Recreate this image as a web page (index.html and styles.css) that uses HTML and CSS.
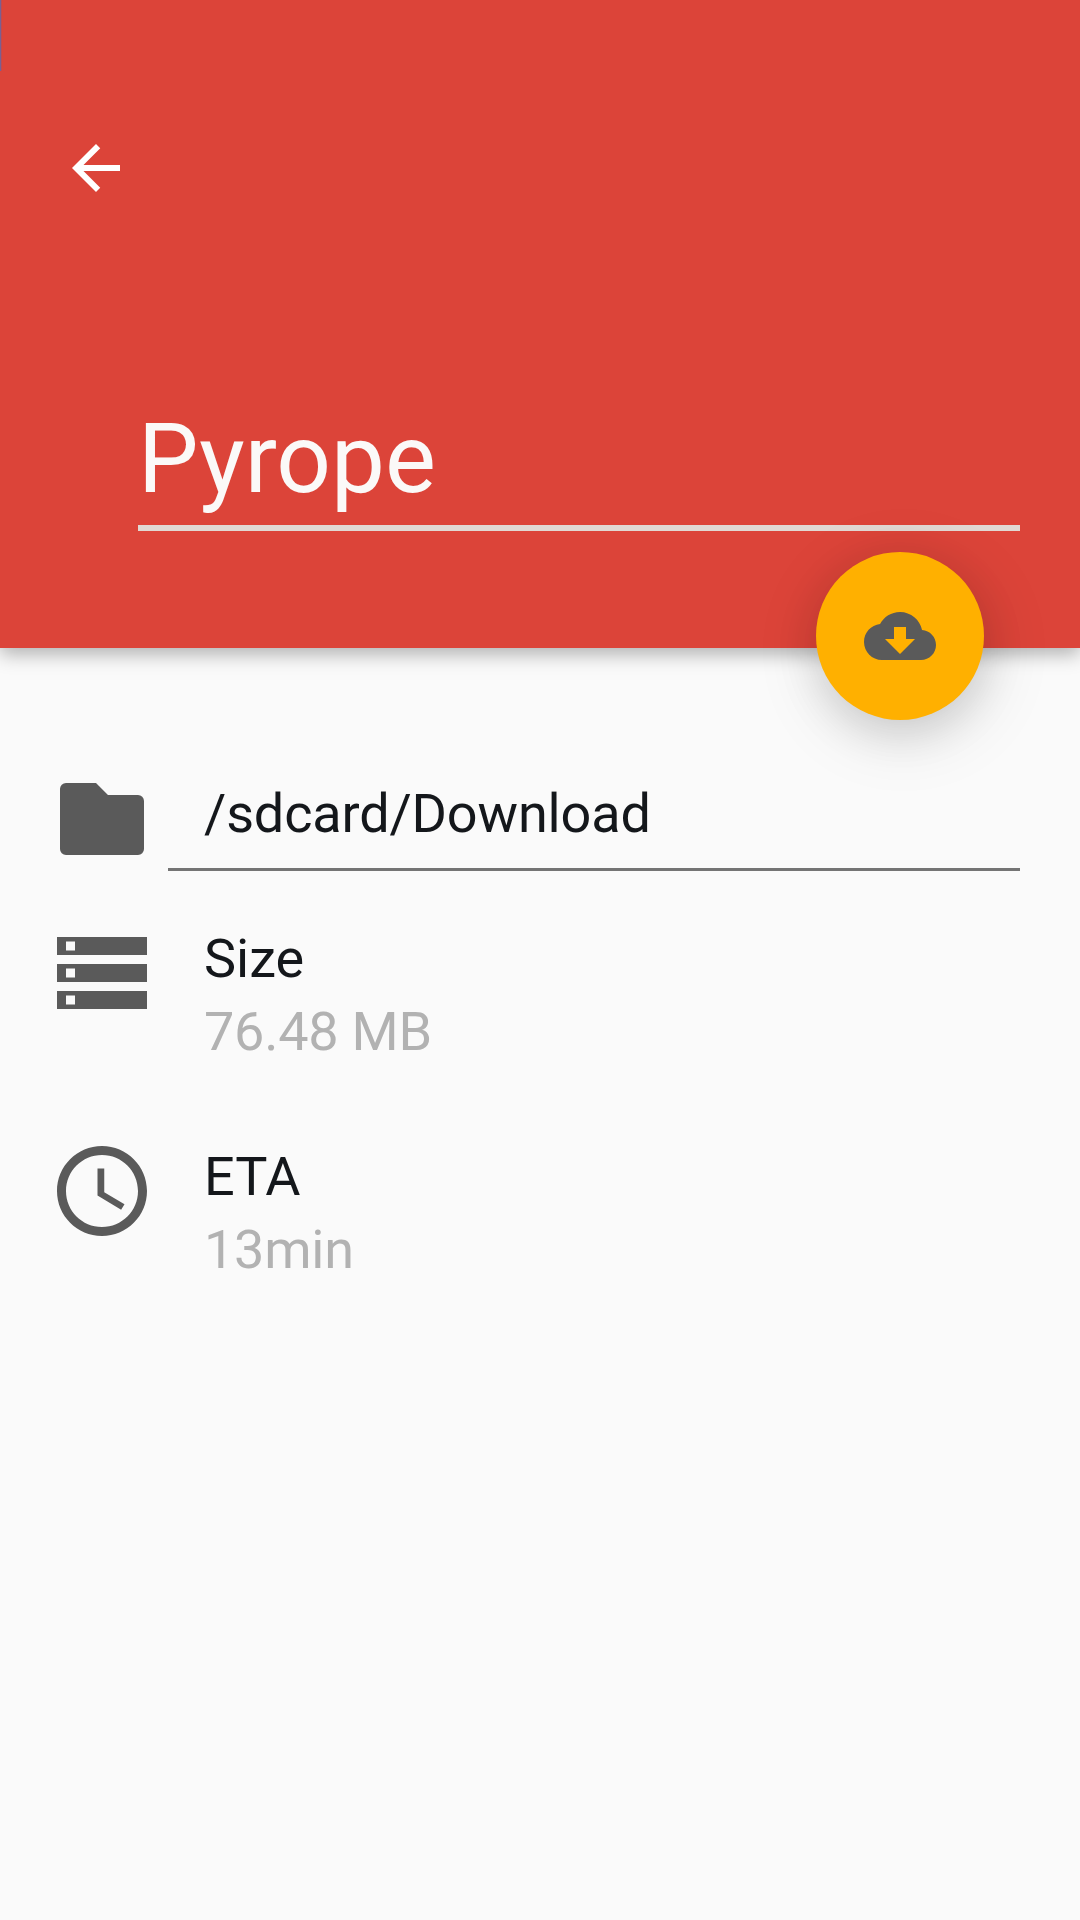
FILE: index.html
```html
<!DOCTYPE html>
<html lang="en">
<head>
<meta charset="utf-8">
<title>Pyrope</title>
<link rel="stylesheet" href="styles.css">
</head>
<body>
<header class="header">
  <span class="edge"></span>
  <button class="back" aria-label="Back"><svg viewBox="0 0 24 24"><path d="M20 11H7.83l5.59-5.59L12 4l-8 8 8 8 1.41-1.41L7.83 13H20z"/></svg></button>
  <h1 class="title">Pyrope</h1>
  <button class="fab" aria-label="Download"><svg viewBox="0 0 24 24"><path d="M19.35 10.04C18.67 6.59 15.64 4 12 4 9.11 4 6.6 5.64 5.35 8.04 2.34 8.36 0 10.91 0 14c0 3.31 2.69 6 6 6h13c2.76 0 5-2.24 5-5 0-2.64-2.05-4.78-4.65-4.96zM17 13l-5 5-5-5h3V9h4v4h3z"/></svg></button>
</header>
<main class="content">
  <section class="row row-path">
    <svg class="icon" viewBox="0 0 108 108"><path d="M18 18H48L60 30H90a6 6 0 0 1 6 6V84a6 6 0 0 1-6 6H18a6 6 0 0 1-6-6V24a6 6 0 0 1 6-6z"/></svg>
    <div class="path">/sdcard/Download</div>
  </section>
  <section class="row">
    <svg class="icon" viewBox="0 0 24 24"><path d="M2 20h20v-4H2v4zm2-3h2v2H4v-2zM2 4v4h20V4H2zm4 3H4V5h2v2zm-4 7h20v-4H2v4zm2-3h2v2H4v-2z"/></svg>
    <div class="info"><div class="label">Size</div><div class="value">76.48 MB</div></div>
  </section>
  <section class="row">
    <svg class="icon" viewBox="0 0 24 24"><path d="M11.99 2C6.47 2 2 6.48 2 12s4.47 10 9.99 10C17.52 22 22 17.52 22 12S17.52 2 11.99 2zM12 20c-4.42 0-8-3.58-8-8s3.58-8 8-8 8 3.58 8 8-3.58 8-8 8zM12.5 7H11v6l5.25 3.15.75-1.23-4.5-2.67z"/></svg>
    <div class="info"><div class="label">ETA</div><div class="value">13min</div></div>
  </section>
</main>
</body>
</html>
```
FILE: styles.css
```css
* { box-sizing: border-box; }
body { margin: 0; height: 1920px; background: #fafafa; font-family: Roboto, sans-serif; color: #14171b; }
button { border: 0; padding: 0; background: none; display: block; }
.header { position: relative; height: 648px; padding: 132px 60px 0; background: #dc4439; box-shadow: 0 6px 18px rgba(0,0,0,.3); }
.edge { position: absolute; left: 0; top: 0; width: 2px; height: 71px; background: linear-gradient(90deg, #7a5f92 50%, #c04b4f 50%); }
.back { width: 72px; height: 72px; }
.back svg { display: block; width: 72px; height: 72px; fill: #fff; }
.title { margin: 198px 0 0 78px; height: 129px; border-bottom: 6px solid #e1d8d3; font-size: 96px; font-weight: 400; line-height: 114px; color: #fbf9f8; }
.fab { position: absolute; left: 816px; top: 552px; width: 168px; height: 168px; border-radius: 50%; background: #ffb000; display: grid; place-items: center; box-shadow: 0 12px 44px rgba(0,0,0,.12), 4px 14px 70px rgba(0,0,0,.12); }
.fab svg { width: 72px; height: 72px; fill: #5a5a5a; }
.content { padding: 117px 60px 0 48px; }
.row { display: flex; height: 218px; }
.row-path { height: 154px; }
.icon { flex: none; width: 108px; height: 108px; fill: #5a5a5a; }
.path { flex: 1; margin-left: 12px; height: 106px; padding-left: 36px; border-bottom: 3px solid #747474; font-size: 54px; line-height: 97px; letter-spacing: -.15px; }
.info { margin: 3px 0 0 48px; font-size: 54px; line-height: 73px; }
.value { color: #b2b2b2; letter-spacing: -.25px; }
```
